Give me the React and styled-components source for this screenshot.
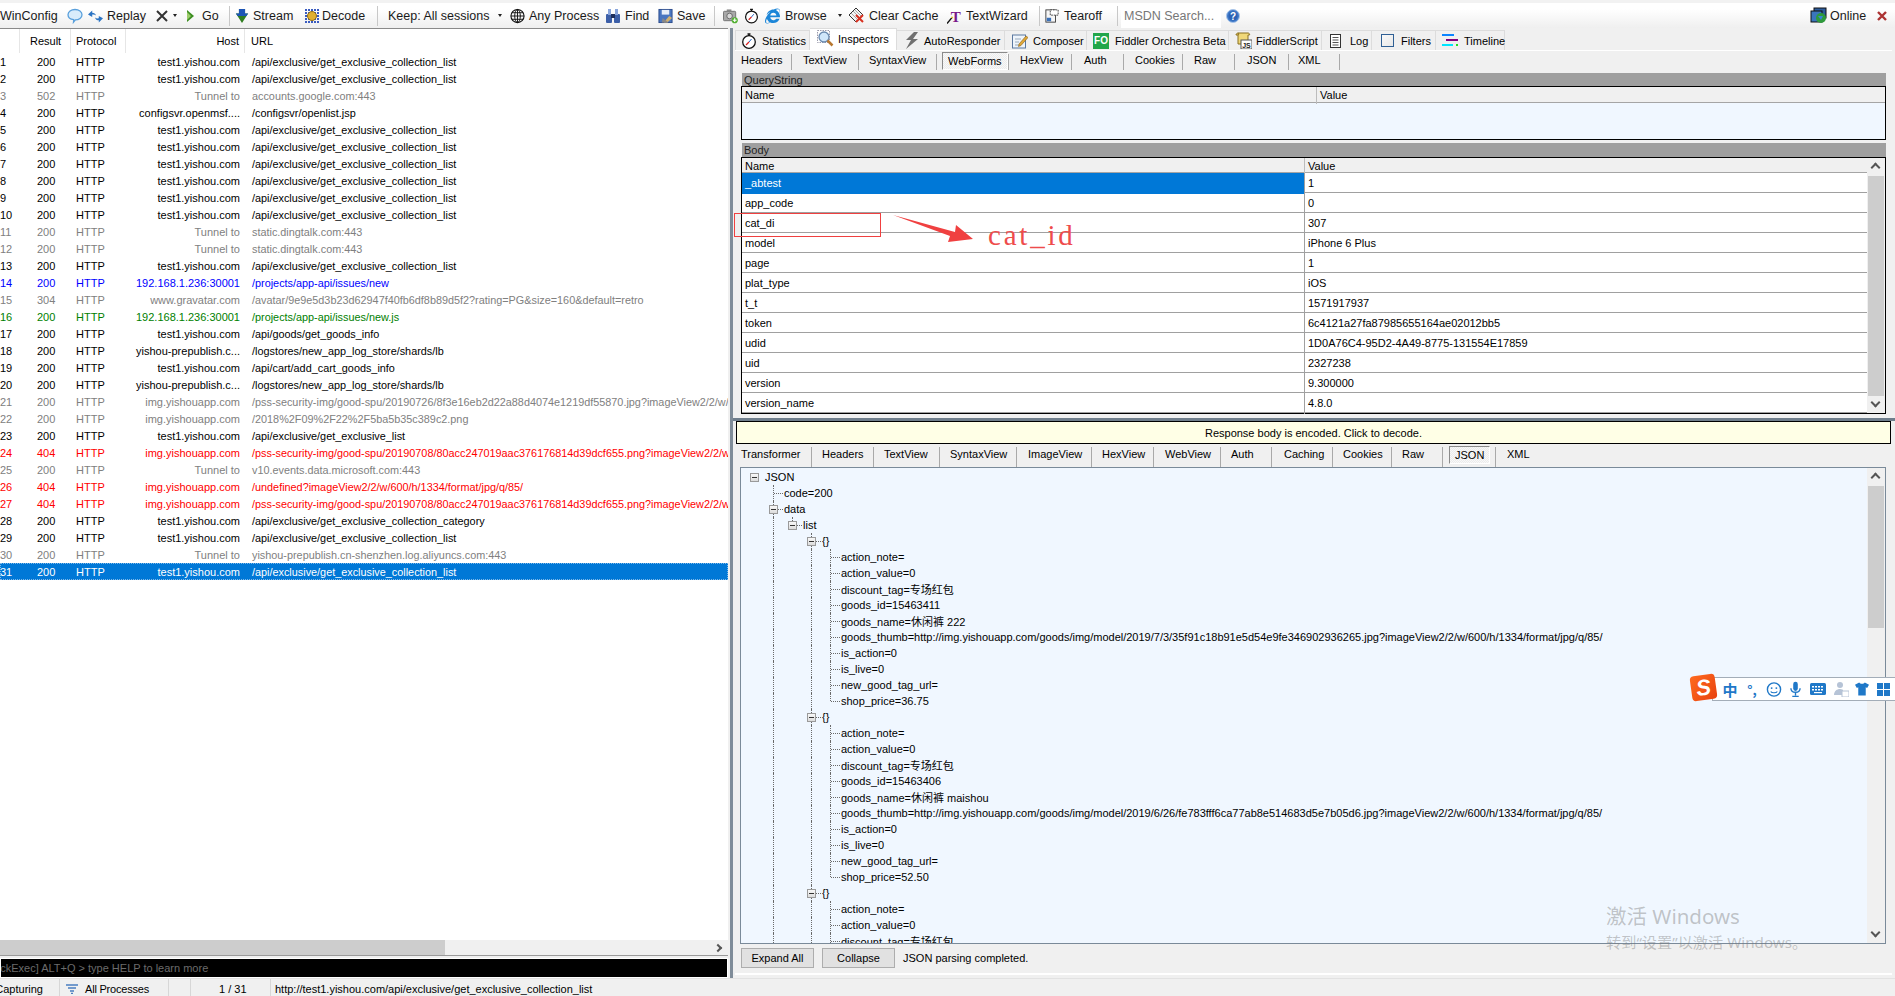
import React from "react";
import styled, { createGlobalStyle } from "styled-components";
import { FaInternetExplorer } from "react-icons/fa";

const Global = createGlobalStyle`
  html, body { margin: 0; padding: 0; background: #f0f0f0; }
  * { box-sizing: border-box; }
`;
const FONT = `"Liberation Sans", "Noto Sans CJK SC", sans-serif`;

const Root = styled.div`
  position: relative; width: 1895px; height: 996px; overflow: hidden;
  display: flex; flex-direction: column; background: #f0f0f0;
  font-family: ${FONT}; font-size: 11px; color: #000;
`;
const Toolbar = styled.div`
  height: 28px; flex: none; display: flex; align-items: center;
  background: linear-gradient(#ffffff 3px, #ffffff 6px, #efefef 100%);
  border-top: 3px solid #f2f2f2; font-size: 12.5px; color: #1a1a1a; white-space: nowrap;
`;
const Slot = styled.div`
  flex: none; width: ${p => p.$w}px; margin-left: ${p => p.$ml}px;
  display: flex; align-items: center; justify-content: center; height: 18px;
  svg { display: block; }
`;
const ToolLabel = styled.span`
  flex: none; width: ${p => p.$w}px; margin-left: ${p => p.$ml}px; letter-spacing: 0;
`;
const ToolSep = styled.span`
  flex: none; width: 1px; height: 20px; margin-left: ${p => p.$ml}px; background: #c8c8c8;
`;
const Caret = styled.span`
  flex: none; margin-left: ${p => p.$ml}px; width: 0; height: 0;
  border-left: 2.5px solid transparent; border-right: 2.5px solid transparent; border-top: 3px solid #222;
`;
const SearchBox = styled.div`
  flex: none; width: 100px; height: 24px; margin-left: ${p => p.$ml}px; padding: 1px 0 0 3px;
  background: #fff; color: #777; display: flex; align-items: center;
`;
const Online = styled.div`
  margin-left: auto; display: flex; align-items: center; padding-right: 8px;
  > svg:last-child { margin-left: 11px; }
`;

const Main = styled.div`flex: 1; min-height: 0; display: flex;`;
const LeftPane = styled.div`
  width: 728px; flex: none; display: flex; flex-direction: column;
  border-top: 1px solid #8a8a8a; background: #fff;
`;
const ListHeader = styled.div`
  height: 24px; flex: none; display: grid; grid-template-columns: 20px 51px 55px 119px 1fr;
  background: #fff;
`;
const HeadCell = styled.div`
  display: flex; align-items: center; border-right: ${p => p.$last ? 0 : 1}px solid #e6e6e6;
  padding-left: ${p => p.$pl || 0}px; padding-right: ${p => p.$pr || 0}px;
  justify-content: ${p => p.$right ? "flex-end" : "flex-start"}; height: 24px; padding-top: 0;
`;
const SessionList = styled.div`flex: 1; min-height: 0; overflow: hidden;`;
const COLORS = { n: "#000", g: "#808080", b: "#0000ff", v: "#008000", r: "#ff0000", s: "#fff" };
const SessionRow = styled.div`
  height: 17px; display: grid; grid-template-columns: 20px 51px 55px 119px 1fr; align-items: center;
  white-space: nowrap; color: ${p => COLORS[p.$tone]};
  background: ${p => p.$tone === "s" ? "#0078d7" : "transparent"};
  ${p => p.$tone === "s" ? "outline: 1px dotted #7fb8e8; outline-offset: -1px;" : ""}
`;
const IdCell = styled.div`text-align: left; overflow: hidden;`;
const ResultCell = styled.div`padding-left: 17px;`;
const ProtoCell = styled.div`padding-left: 5px;`;
const HostCell = styled.div`text-align: right; padding-right: 5px; overflow: hidden;`;
const UrlCell = styled.div`padding-left: 7px; overflow: hidden; font-size: 10.85px;`;
const HScroll = styled.div`
  height: 15px; flex: none; background: #f0f0f0; display: flex; position: relative;
  align-items: center; justify-content: flex-end; padding-right: 5px;
`;
const HThumb = styled.div`position: absolute; left: 0; top: 0; bottom: 0; width: 445px; background: #cdcdcd;`;
const ChevR = styled.span`
  width: 6px; height: 6px; border-right: 2px solid #555; border-top: 2px solid #555; transform: rotate(45deg);
  margin-right: 2px;
`;
const QuickGap = styled.div`height: 3px; flex: none; background: #f0f0f0; border-top: 1px solid #9a9a9a;`;
const QuickExec = styled.div`
  height: 20px; flex: none; background: #000; color: #6b6b6b; border: 1px solid #fff;
  display: flex; align-items: center; overflow: hidden; white-space: nowrap;
  span { margin-left: -21px; }
`;
const VSplit = styled.div`width: 5px; flex: none; background: linear-gradient(90deg, #f0f0f0 40%, #7f8c99 40%);`;

const RightPane = styled.div`flex: 1; min-width: 0; display: flex; flex-direction: column; padding-right: 3px;`;
const TabStrip = styled.div`height: 22px; flex: none; display: flex; align-items: flex-end; padding-left: 2px;`;
const MainTab = styled.div`
  flex: none; width: ${p => p.$w}px; padding-left: ${p => p.$pl}px; display: flex; align-items: center;
  gap: ${p => p.$gap}px; height: ${p => p.$active ? 22 : 20}px;
  background: ${p => p.$active ? "#fff" : "#f0f0f0"};
  border: 1px solid #dcdcdc; border-bottom: 0; border-left-width: ${p => p.$first ? 1 : 0}px;
  white-space: nowrap; padding-bottom: ${p => p.$active ? 2 : 0}px;
  svg { flex: none; display: block; }
`;
const Panel = styled.div`
  flex: 1; min-height: 0; display: flex; flex-direction: column; margin-left: 2px;
  border-top: 1px solid #fff;
`;
const SubTabs = styled.div`
  height: ${p => p.$h}px; flex: none; display: flex; align-items: stretch;
`;
const SubTab = styled.div`
  flex: none; width: ${p => p.$w}px; display: flex; align-items: center; padding: 0 0 ${p => p.$pb}px ${p => p.$pl}px;
  white-space: nowrap; position: relative;
  &::after { content: ${p => p.$nosep ? "none" : `""`}; position: absolute; right: 0; top: 3px; bottom: 0; width: 1px; background: #a9a9a9; }
`;
const ActiveTabBox = styled.span`
  padding: 2px 5px; border: 1px solid; border-color: #8a8a8a #fff #fff #8a8a8a; margin-top: 2px;
  background: repeating-conic-gradient(#f8f8f8 0 25%, #ececec 0 50%) 0 0 / 2px 2px;
`;
const Section = styled.div`margin: ${p => p.$mt}px 6px 0 5px; flex: none;`;
const SectionBar = styled.div`
  height: ${p => p.$h}px; background: #9f9f9f; padding-left: 2px; line-height: 14px; color: #222; margin-left: 2px;
`;
const GridBox = styled.div`
  height: ${p => p.$h}px; border: 1px solid #000; margin-left: 1px; position: relative;
  background: ${p => p.$tint ? "#f0f7ff" : "#fff"}; display: flex; flex-direction: column;
`;
const GridHead = styled.div`
  height: ${p => p.$h}px; flex: none; background: #f0f0f0; border-bottom: 1px solid #a5a5a5;
  display: grid; grid-template-columns: ${p => p.$cols}; align-items: center; margin-right: ${p => p.$mr || 0}px;
`;
const GridHeadCell = styled.div`
  padding-left: ${p => p.$pl}px; height: 100%; line-height: 17px; border-left: ${p => p.$sep ? "1px solid #bcbcbc" : 0};
`;
const GridRow = styled.div`
  height: 20px; flex: none; display: grid; grid-template-columns: 562px 1fr; margin-right: 18px;
  border-bottom: 1px solid #a0a0a0;
  &:last-child { border-bottom: 0; }
`;
const NameCell = styled.div`
  padding-left: 3px; line-height: 21px; background: ${p => p.$sel ? "#0078d7" : "transparent"};
  color: ${p => p.$sel ? "#fff" : "#000"};
`;
const ValueCell = styled.div`padding-left: 3px; line-height: 21px; border-left: 1px solid #a0a0a0;`;
const VScroll = styled.div`
  position: absolute; right: 0; top: ${p => p.$top || 0}px; bottom: 0; width: 18px; background: #f0f0f0;
`;
const VThumb = styled.div`
  position: absolute; left: 1px; right: 1px; top: ${p => p.$top}px; height: ${p => p.$h}px; background: #cdcdcd;
`;
const ArrowMark = styled.span`
  position: absolute; left: 5px; ${p => p.$up ? "top: 6px" : "bottom: 7px"}; width: 7px; height: 7px;
  border-right: 2px solid #555; border-bottom: 2px solid #555;
  transform: rotate(${p => p.$up ? 225 : 45}deg);
`;
const HSplit = styled.div`height: 3px; flex: none; margin-top: 4px; background: #6f7e8c; margin-left: -2px; margin-right: -3px;`;
const NoticeBar = styled.div`
  height: 23px; flex: none; background: #ffffe6; border: 1px solid #000; margin: 0 1px 0 1px;
  display: flex; align-items: center; justify-content: center;
`;
const TreeBox = styled.div`
  flex: 1; min-height: 0; margin: 0 6px 0 5px; border: 1px solid #7a8a99;
  background: #f0f7ff; position: relative; overflow: hidden; padding: 1px 0 0 4px;
`;
const TreeRow = styled.div`height: 16px; display: flex; align-items: center; white-space: nowrap;`;
const Cell = styled.div`
  flex: none; width: 19px; height: 16px; position: relative;
  &::before {
    content: ${p => p.$v ? `""` : "none"}; position: absolute; left: 9px; top: 0;
    bottom: ${p => p.$v === "end" ? 8 : 0}px; border-left: 1px dotted #6a6a6a;
  }
  &::after {
    content: ${p => p.$h ? `""` : "none"}; position: absolute; left: 10px; top: 8px; width: 9px;
    border-top: 1px dotted #6a6a6a;
  }
`;
const Toggle = styled.span`
  position: absolute; left: 5px; top: 4px; width: 9px; height: 9px; z-index: 1;
  border: 1px solid #9a9a9a; background: linear-gradient(#f8f8f8, #dcdcdc);
  &::after { content: ""; position: absolute; left: 1px; right: 1px; top: 3px; height: 1px; background: #333; }
`;
const TreeText = styled.span`margin-left: 1px;`;
const ButtonRow = styled.div`
  height: 29px; flex: none; display: flex; align-items: center; gap: 8px; padding: 0 0 2px 6px;
`;
const Btn = styled.div`
  width: 73px; height: 20px; background: #e1e1e1; border: 1px solid #adadad;
  display: flex; align-items: center; justify-content: center;
`;
const PanelFoot = styled.div`height: 5px; flex: none; border-top: 2px solid #fff;`;
const StatusBar = styled.div`
  height: 18px; flex: none; display: flex; align-items: center; background: #f0f0f0;
  border-top: 1px solid #e2e2e2; white-space: nowrap;
`;
const StatusCell = styled.div`
  flex: none; width: ${p => p.$w}px; height: 100%; display: flex; align-items: center; overflow: hidden;
  justify-content: ${p => p.$align || "flex-start"}; padding: 2px ${p => p.$pr || 0}px 0 ${p => p.$pl || 0}px; gap: 7px;
  border-right: ${p => p.$nosep ? 0 : "1px solid #d7d7d7"};
`;
const TightLabel = styled.span`letter-spacing: -0.2px;`;

/* overlays */
const MarkRect = styled.div`
  position: absolute; left: 734px; top: 213px; width: 147px; height: 24px; border: 1px solid #f04040;
`;
const MarkArrow = styled.svg`position: absolute; left: 890px; top: 212px;`;
const MarkText = styled.div`
  position: absolute; left: 988px; top: 218px; font-family: "Liberation Serif", serif; font-size: 29px;
  line-height: 34px; letter-spacing: 2.8px; color: #ee4c4c;
`;
const Watermark = styled.div`
  position: absolute; left: 1606px; top: ${p => p.$top}px; font-family: "Noto Sans", "Noto Sans CJK SC", sans-serif;
  font-size: ${p => p.$size}px; line-height: 1.2; color: rgba(120,120,120,.42); white-space: nowrap;
`;
const ImeBar = styled.div`
  position: absolute; left: 1712px; top: 677px; width: 183px; height: 24px; background: #fff;
  border: 1px solid #a3adb8; border-right: 0; display: flex; align-items: center; color: #1f78c8;
`;
const ImeLogo = styled.div`
  position: absolute; left: 1691px; top: 675px; width: 25px; height: 25px; border-radius: 4px; transform: rotate(-8deg);
  background: linear-gradient(135deg, #ff6a1f, #e8430f); color: #fff; font: italic bold 22px/25px "Liberation Sans", sans-serif;
  text-align: center;
`;
const ImeGlyph = styled.span`
  flex: none; width: ${p => p.$w}px; margin-left: ${p => p.$ml}px; font: bold ${p => p.$size || 14}px/1 "Noto Sans CJK SC", sans-serif;
  display: flex; justify-content: center; svg { display: block; }
`;

/* icons */
const Svg = ({ s = 16, children }) => <svg width={s} height={s} viewBox="0 0 16 16" fill="none">{children}</svg>;
const Bubble = () => <Svg><path d="M8 1.5c4 0 7 2.2 7 5.2s-3 5.2-6.6 5.2l-1.9 2.3.2-2.5C3.400 11.200 1 9.500 1 6.700 1 3.700 4 1.500 8 1.500z" fill="#d8ecfb" stroke="#5aa0dc" strokeWidth="1.3"/></Svg>;
const ReplayIc = () => <Svg><path d="M0 6.500L4.500 2v2.500c2 0 3.500.8 4 3-1-1-2.300-1.200-4-1V9z" fill="#2b74c4"/><path d="M16 10.500L11.500 15v-2.500c-2 0-3.500-.8-4-3 1 1 2.300 1.200 4 1V8z" fill="#2b74c4"/></Svg>;
const Cross = () => <svg width="12" height="12" viewBox="0 0 12 12"><path d="M1 1l10 10M11 1L1 11" stroke="#333" strokeWidth="2"/></svg>;
const GoIc = () => <svg width="7" height="12" viewBox="0 0 7 12"><path d="M0 0l7 6-7 6z" fill="#3d8f22"/><path d="M0 2l4 4-4 4z" fill="#9ccc6a"/></svg>;
const StreamIc = () => <Svg><path d="M4.500 0h7v5H15l-7 11-7-11h3.500z" fill="#2f7d20"/><path d="M4.500 0h7v5H15L13 8H3L1 5h3.500z" fill="#1d55b5"/></Svg>;
const DecodeIc = () => <Svg>{[1,4,7,10,13].map(x => [1,4,7,10,13].map(y => <rect key={x+"-"+y} x={x} y={y} width="2" height="2" fill="#3a5cc0"/>))}<circle cx="8" cy="8" r="4.500" fill="#e0b030" stroke="#8f6a10"/></Svg>;
const GlobeIc = () => <Svg><circle cx="8" cy="8" r="7" stroke="#111" strokeWidth="1.2"/><ellipse cx="8" cy="8" rx="3" ry="7" stroke="#111"/><path d="M1 8h14M2 4.500h12M2 11.500h12M8 1v14" stroke="#111"/></Svg>;
const BinocIc = () => <Svg><rect x="1" y="6" width="6" height="9" rx="1" fill="#3c5fa8"/><rect x="9" y="6" width="6" height="9" rx="1" fill="#3c5fa8"/><rect x="3" y="1" width="3" height="6" fill="#8aa6dc"/><rect x="10" y="1" width="3" height="6" fill="#8aa6dc"/><rect x="6" y="6" width="4" height="4" fill="#1e2f5c"/></Svg>;
const SaveIc = () => <Svg><rect x="1" y="1" width="14" height="14" fill="#4a76c0" stroke="#2a4a8c"/><rect x="4" y="1.500" width="8" height="5" fill="#e8eef8"/><path d="M6 15l6-7 3 2-5 5z" fill="#d0b070"/><path d="M5 10l6 5H4z" fill="#888"/></Svg>;
const SnapIc = () => <Svg><rect x="0.500" y="3" width="13" height="10" rx="1" fill="#a8a8a8" stroke="#707070"/><rect x="4" y="1" width="5" height="2" fill="#888"/><circle cx="7" cy="8" r="3" fill="#d8d8d8" stroke="#666"/><circle cx="12.500" cy="12.500" r="3.300" fill="#52b032"/><path d="M12.500 10.500v4M10.500 12.500h4" stroke="#fff" strokeWidth="1.200"/></Svg>;
const TimerIc = ({ s = 16 }) => <Svg s={s}><circle cx="8" cy="9" r="6.300" fill="#fff" stroke="#111" strokeWidth="1.300"/><path d="M6.500 1h3M8 1v2" stroke="#111" strokeWidth="1.300"/><path d="M8 9L5 12" stroke="#d82020" strokeWidth="1.300"/><path d="M8 9l2.500-3" stroke="#2060c0"/></Svg>;
const ClearIc = () => <svg width="17" height="17" viewBox="0 0 17 17" fill="none"><path d="M8 1l7 7-7 7-7-7z" fill="#f4f4f4" stroke="#333"/><path d="M3 6l6 6M5 4l6 6M7 3l6 6" stroke="#888" strokeWidth=".7"/><path d="M8 8l7 7M15 8l-7 7" stroke="#d83020" strokeWidth="2"/></svg>;
const SerifT = styled.text`font: bold 16px "Liberation Serif", serif; fill: #7a1a8a;`;
const WizardIc = () => <Svg><SerifT x="4" y="14">T</SerifT><path d="M0 16l5-6" stroke="#111" strokeWidth="1.500"/><path d="M5 10l1-1" stroke="#e0c020" strokeWidth="2"/></Svg>;
const TearIc = () => <Svg><rect x="1" y="1" width="11" height="14" fill="#f6f6f6" stroke="#333"/><rect x="6" y="1" width="9" height="6" fill="#fff" stroke="#333" strokeDasharray="2 1"/><rect x="2" y="10" width="5" height="4" fill="#3a70b8"/></Svg>;
const HelpIc = () => <svg width="14" height="14" viewBox="0 0 14 14"><circle cx="7" cy="7" r="6.500" fill="#3d78c8" stroke="#a8c4e8"/><circle cx="7" cy="7" r="4.500" fill="#2c62b4"/><text x="7" y="10.500" textAnchor="middle" fontFamily="Liberation Sans" fontWeight="bold" fontSize="10" fill="#fff">?</text></svg>;
const OnlineIc = () => <svg width="17" height="17" viewBox="0 0 17 17"><rect x="4" y="1" width="12" height="10" fill="#2c5c9c" stroke="#111"/><rect x="1" y="4" width="11" height="11" fill="#3a76bc" stroke="#111"/><circle cx="11" cy="11" r="5" fill="#2e9a3c"/><path d="M8 9h5l-2 4z" fill="#3a86d8"/></svg>;
const CloseIc = () => <svg width="10" height="10" viewBox="0 0 10 10"><path d="M1 1l8 8M9 1l-8 8" stroke="#ac3232" strokeWidth="2.400"/></svg>;
const MagnIc = () => <svg width="17" height="17" viewBox="0 0 17 17" fill="none"><rect x="0.500" y="0.500" width="12" height="12" stroke="#99a" strokeDasharray="1.500 1"/><circle cx="7" cy="7" r="5" fill="#cfe6fa" stroke="#6a8ab0" strokeWidth="1.300"/><path d="M10.500 10.500l5 5" stroke="#b87830" strokeWidth="2.500"/></svg>;
const BoltIc = () => <svg width="14" height="17" viewBox="0 0 14 17"><path d="M9 0L1 8h5l-5 9 12-10H8l5-7z" fill="#707070"/></svg>;
const ComposerIc = () => <Svg><rect x="0.500" y="2" width="13" height="13" fill="#eef4fb" stroke="#5a78a0"/><path d="M3 6h6M3 9h4M3 12h5" stroke="#9ab"/><path d="M7 11l7-8 2 1.500-7 8-2.500 1z" fill="#e0a838" stroke="#886018" strokeWidth=".6"/></Svg>;
const FoBadge = styled.span`
  width: 16px; height: 16px; background: #21a64a; color: #fff; font: bold 10px/16px "Liberation Sans", sans-serif;
  text-align: center; flex: none;
`;
const ScriptIc = () => <svg width="17" height="17" viewBox="0 0 17 17"><path d="M3 1h10c1 0 2 1 1.500 2H13v9H3z" fill="#f0d878" stroke="#8a7020"/><path d="M1 3c0-1 1-2 2-2s1 2 0 2z" fill="#e8c860" stroke="#8a7020"/><rect x="6" y="8" width="11" height="9" fill="#fff" stroke="#555"/><text x="11.500" y="15.500" textAnchor="middle" fontFamily="Liberation Sans" fontWeight="bold" fontSize="7" fill="#222">JS</text></svg>;
const LogIc = () => <svg width="11" height="14" viewBox="0 0 11 14" fill="none"><rect x=".5" y=".5" width="10" height="13" fill="#fff" stroke="#333"/><path d="M2.500 3.500h6M2.500 6h6M2.500 8.500h6M2.500 11h6" stroke="#555"/></svg>;
const FilterBox = styled.span`width: 13px; height: 13px; border: 1px solid #2f5f94; background: linear-gradient(135deg, #f8f8f8, #e8e8e8); flex: none;`;
const TimelineIc = () => <svg width="16" height="13" viewBox="0 0 16 13"><rect x="0" y="0" width="12" height="2" fill="#0a84ff"/><rect x="4" y="5" width="12" height="2" fill="#800080"/><rect x="0" y="10" width="11" height="2" fill="#00e5ff"/><rect x="14" y="10" width="2" height="2" fill="#22e022"/></svg>;
const FunnelIc = () => <svg width="12" height="10" viewBox="0 0 12 10"><path d="M0 1h12M2 4h8M4 7h4M5 9.500h2" stroke="#4a7ec0" strokeWidth="1.300"/></svg>;
const ArrowSvg = () => <MarkArrow width="90" height="34" viewBox="0 0 90 34"><path d="M3 3l62 17 1-7 17 14-25 3 2-6z" fill="#f04040"/></MarkArrow>;
const Smile = () => <svg width="17" height="17" viewBox="0 0 17 17" fill="none"><circle cx="8.500" cy="8.500" r="7" stroke="#1f78c8" strokeWidth="1.500"/><circle cx="6" cy="7" r="1" fill="#1f78c8"/><circle cx="11" cy="7" r="1" fill="#1f78c8"/><path d="M5 10.500c1 2 6 2 7 0" stroke="#1f78c8" strokeWidth="1.200"/></svg>;
const Mic = () => <svg width="12" height="17" viewBox="0 0 12 17" fill="none"><rect x="3.500" y="0" width="5" height="10" rx="2.500" fill="#1f78c8"/><path d="M1 7c0 6 10 6 10 0M6 12v3M2.500 16h7" stroke="#1f78c8" strokeWidth="1.500"/></svg>;
const Keys = () => <svg width="16" height="12" viewBox="0 0 16 12"><rect width="16" height="12" rx="1.500" fill="#1f78c8"/>{[2,5,8,11].map(x => <rect key={x} x={x} y="3" width="2" height="1.500" fill="#fff"/>)}{[2,5,8,11].map(x => <rect key={x} x={x} y="6" width="2" height="1.500" fill="#fff"/>)}<rect x="4" y="9" width="8" height="1.200" fill="#fff"/></svg>;
const Person = () => <svg width="16" height="16" viewBox="0 0 16 16"><circle cx="7" cy="4" r="3" fill="#b6c3d6"/><path d="M1 14c0-4 3-6 6-6 2 0 3 1 3 1v5z" fill="#b6c3d6"/><rect x="9" y="10" width="7" height="6" fill="#fff" stroke="#b6c3d6"/></svg>;
const Shirt = () => <svg width="15" height="14" viewBox="0 0 15 14"><path d="M4.500 0L0 2.500 2 6l1.500-.8V14h8V5.200L13 6l2-3.500L10.500 0c-1 2-5 2-6 0z" fill="#1f78c8"/></svg>;
const Tiles = () => <svg width="13" height="13" viewBox="0 0 13 13"><rect width="6" height="6" fill="#1f78c8"/><rect x="7" width="6" height="6" fill="#1f78c8"/><rect y="7" width="6" height="6" fill="#1f78c8"/><rect x="7" y="7" width="6" height="6" fill="#1f78c8"/></svg>;

/* data */
const API = "/api/exclusive/get_exclusive_collection_list";
const T1 = "test1.yishou.com";
const PSS = "/pss-security-img/good-spu/20190708/80acc247019aac376176814d39dcf655.png?imageView2/2/w/600/h/1334/format/jpg/q/85/";
const sessions = [
  ["1","200",T1,API,"n"],["2","200",T1,API,"n"],
  ["3","502","Tunnel to","accounts.google.com:443","g"],
  ["4","200","configsvr.openmsf....","/configsvr/openlist.jsp","n"],
  ["5","200",T1,API,"n"],["6","200",T1,API,"n"],["7","200",T1,API,"n"],["8","200",T1,API,"n"],["9","200",T1,API,"n"],["10","200",T1,API,"n"],
  ["11","200","Tunnel to","static.dingtalk.com:443","g"],["12","200","Tunnel to","static.dingtalk.com:443","g"],
  ["13","200",T1,API,"n"],
  ["14","200","192.168.1.236:30001","/projects/app-api/issues/new","b"],
  ["15","304","www.gravatar.com","/avatar/9e9e5d3b23d62947f40fb6df8b89d5f2?rating=PG&size=160&default=retro","g"],
  ["16","200","192.168.1.236:30001","/projects/app-api/issues/new.js","v"],
  ["17","200",T1,"/api/goods/get_goods_info","n"],
  ["18","200","yishou-prepublish.c...","/logstores/new_app_log_store/shards/lb","n"],
  ["19","200",T1,"/api/cart/add_cart_goods_info","n"],
  ["20","200","yishou-prepublish.c...","/logstores/new_app_log_store/shards/lb","n"],
  ["21","200","img.yishouapp.com","/pss-security-img/good-spu/20190726/8f3e16eb2d22a88d4074e1219df55870.jpg?imageView2/2/w/600/h/1334/format/jpg/q/85/","g"],
  ["22","200","img.yishouapp.com","/2018%2F09%2F22%2F5ba5b35c389c2.png","g"],
  ["23","200",T1,"/api/exclusive/get_exclusive_list","n"],
  ["24","404","img.yishouapp.com",PSS,"r"],
  ["25","200","Tunnel to","v10.events.data.microsoft.com:443","g"],
  ["26","404","img.yishouapp.com","/undefined?imageView2/2/w/600/h/1334/format/jpg/q/85/","r"],
  ["27","404","img.yishouapp.com",PSS,"r"],
  ["28","200",T1,"/api/exclusive/get_exclusive_collection_category","n"],
  ["29","200",T1,API,"n"],
  ["30","200","Tunnel to","yishou-prepublish.cn-shenzhen.log.aliyuncs.com:443","g"],
  ["31","200",T1,API,"s"],
];
const bodyRows = [
  ["_abtest","1"],["app_code","0"],["cat_di","307"],["model","iPhone 6 Plus"],["page","1"],["plat_type","iOS"],
  ["t_t","1571917937"],["token","6c4121a27fa87985655164ae02012bb5"],["udid","1D0A76C4-95D2-4A49-8775-131554E17859"],
  ["uid","2327238"],["version","9.300000"],["version_name","4.8.0"],
];
const reqTabs = [["Headers",57,6],["TextView",67,11],["SyntaxView",78,10],["WebForms",72,5,true],["HexView",63,11],["Auth",52,12],["Cookies",59,11],["Raw",52,11],["JSON",54,12],["XML",51,9]];
const resTabs = [["Transformer",77,6],["Headers",62,10],["TextView",66,10],["SyntaxView",77,10],["ImageView",75,11],["HexView",62,10],["WebView",67,11],["Auth",51,10],["Caching",61,12],["Cookies",59,10],["Raw",51,10],["JSON",53,6,true],["XML",50,11,false,true]];
const mainTabs = [
  ["Statistics",75,5,5,<TimerIc key="a"/>],["Inspectors",87,7,4,<MagnIc key="b"/>,true],["AutoResponder",108,8,5,<BoltIc key="c"/>],
  ["Composer",82,7,5,<ComposerIc key="d"/>],["Fiddler Orchestra Beta",142,6,6,<FoBadge key="e">FO</FoBadge>],
  ["FiddlerScript",93,6,4,<ScriptIc key="f"/>],["Log",50,8,9,<LogIc key="g"/>],["Filters",64,9,7,<FilterBox key="h"/>],["Timeline",69,6,6,<TimelineIc key="i"/>],
];
const item = (thumb, id, gname, price) => [
  "action_note=","action_value=0","discount_tag=专场红包",`goods_id=${id}`,`goods_name=${gname}`,`goods_thumb=${thumb}`,
  "is_action=0","is_live=0","new_good_tag_url=",`shop_price=${price}`,
];
const blocks = [
  item("http://img.yishouapp.com/goods/img/model/2019/7/3/35f91c18b91e5d54e9fe346902936265.jpg?imageView2/2/w/600/h/1334/format/jpg/q/85/","15463411","休闲裤 222","36.75"),
  item("http://img.yishouapp.com/goods/img/model/2019/6/26/fe783fff6ca77ab8e514683d5e7b05d6.jpg?imageView2/2/w/600/h/1334/format/jpg/q/85/","15463406","休闲裤 maishou","52.50"),
  ["action_note=","action_value=0","discount_tag=专场红包"],
];

const Branch = ({ guides, last, toggle, text }) => (
  <TreeRow>
    {guides.map((g, i) => <Cell key={i} $v={g} />)}
    <Cell $v={last ? "end" : true} $h>{toggle && <Toggle />}</Cell>
    <TreeText>{text}</TreeText>
  </TreeRow>
);

export default function App() {
  return (
    <Root>
      <Global />
      <Toolbar>
        <ToolLabel $ml={0} $w={55}>WinConfig</ToolLabel>
        <Slot $ml={12} $w={16}><Bubble /></Slot>
        <Slot $ml={5} $w={15}><ReplayIc /></Slot>
        <ToolLabel $ml={4} $w={39}>Replay</ToolLabel>
        <Slot $ml={10} $w={12}><Cross /></Slot>
        <Caret $ml={5} />
        <Slot $ml={10} $w={7}><GoIc /></Slot>
        <ToolLabel $ml={8} $w={17}>Go</ToolLabel>
        <ToolSep $ml={10} />
        <Slot $ml={5} $w={14}><StreamIc /></Slot>
        <ToolLabel $ml={4} $w={41}>Stream</ToolLabel>
        <Slot $ml={10} $w={16}><DecodeIc /></Slot>
        <ToolLabel $ml={2} $w={45}>Decode</ToolLabel>
        <ToolSep $ml={10} />
        <ToolLabel $ml={10} $w={103}>Keep: All sessions</ToolLabel>
        <Caret $ml={7} />
        <Slot $ml={8} $w={15}><GlobeIc /></Slot>
        <ToolLabel $ml={4} $w={69}>Any Process</ToolLabel>
        <Slot $ml={7} $w={16}><BinocIc /></Slot>
        <ToolLabel $ml={4} $w={23}>Find</ToolLabel>
        <Slot $ml={10} $w={15}><SaveIc /></Slot>
        <ToolLabel $ml={4} $w={27}>Save</ToolLabel>
        <ToolSep $ml={10} />
        <Slot $ml={8} $w={15}><SnapIc /></Slot>
        <Slot $ml={6} $w={15}><TimerIc /></Slot>
        <Slot $ml={6} $w={15}><FaInternetExplorer size={16} color="#1c86d8" /></Slot>
        <ToolLabel $ml={5} $w={42}>Browse</ToolLabel>
        <Caret $ml={11} />
        <Slot $ml={6} $w={17}><ClearIc /></Slot>
        <ToolLabel $ml={4} $w={68}>Clear Cache</ToolLabel>
        <Slot $ml={10} $w={15}><WizardIc /></Slot>
        <ToolLabel $ml={4} $w={64}>TextWizard</ToolLabel>
        <ToolSep $ml={9} />
        <Slot $ml={5} $w={14}><TearIc /></Slot>
        <ToolLabel $ml={5} $w={41}>Tearoff</ToolLabel>
        <ToolSep $ml={12} />
        <SearchBox $ml={3}>MSDN Search...</SearchBox>
        <Slot $ml={5} $w={14}><HelpIc /></Slot>
        <Online>
          <OnlineIc />
          <ToolLabel $ml={3} $w={36}>Online</ToolLabel>
          <CloseIc />
        </Online>
      </Toolbar>

      <Main>
        <LeftPane>
          <ListHeader>
            <HeadCell />
            <HeadCell $pl={10}>Result</HeadCell>
            <HeadCell $pl={5}>Protocol</HeadCell>
            <HeadCell $right $pr={5}>Host</HeadCell>
            <HeadCell $pl={6} $last>URL</HeadCell>
          </ListHeader>
          <SessionList>
            {sessions.map(([id, res, host, url, tone]) => (
              <SessionRow key={id} $tone={tone}>
                <IdCell>{id}</IdCell>
                <ResultCell>{res}</ResultCell>
                <ProtoCell>HTTP</ProtoCell>
                <HostCell>{host}</HostCell>
                <UrlCell>{url}</UrlCell>
              </SessionRow>
            ))}
          </SessionList>
          <HScroll><HThumb /><ChevR /></HScroll>
          <QuickGap />
          <QuickExec><span>[QuickExec] ALT+Q &gt; type HELP to learn more</span></QuickExec>
        </LeftPane>
        <VSplit />
        <RightPane>
          <TabStrip>
            {mainTabs.map(([label, w, pl, gap, icon, active], i) => (
              <MainTab key={label} $w={w} $pl={pl} $gap={gap} $active={active} $first={i === 0}>{icon}{label}</MainTab>
            ))}
          </TabStrip>
          <Panel>
            <SubTabs $h={19}>
              {reqTabs.map(([label, w, pl, active]) => (
                <SubTab key={label} $w={w} $pl={pl} $pb={2}>{active ? <ActiveTabBox>{label}</ActiveTabBox> : label}</SubTab>
              ))}
            </SubTabs>
            <Section $mt={3}>
              <SectionBar $h={13}>QueryString</SectionBar>
              <GridBox $h={54} $tint>
                <GridHead $h={16} $cols="574px 1fr"><GridHeadCell $pl={3}>Name</GridHeadCell><GridHeadCell $pl={3} $sep>Value</GridHeadCell></GridHead>
              </GridBox>
            </Section>
            <Section $mt={3}>
              <SectionBar $h={14}>Body</SectionBar>
              <GridBox $h={257}>
                <GridHead $h={15} $cols="562px 1fr" $mr={18}><GridHeadCell $pl={3}>Name</GridHeadCell><GridHeadCell $pl={3} $sep>Value</GridHeadCell></GridHead>
                {bodyRows.map(([n, v], i) => (
                  <GridRow key={n}><NameCell $sel={i === 0}>{n}</NameCell><ValueCell>{v}</ValueCell></GridRow>
                ))}
                <VScroll><ArrowMark $up /><VThumb $top={18} $h={220} /><ArrowMark /></VScroll>
              </GridBox>
            </Section>
            <HSplit />
            <NoticeBar>Response body is encoded. Click to decode.</NoticeBar>
            <SubTabs $h={23}>
              {resTabs.map(([label, w, pl, active, nosep]) => (
                <SubTab key={label} $w={w} $pl={pl} $pb={4} $nosep={nosep}>{active ? <ActiveTabBox>{label}</ActiveTabBox> : label}</SubTab>
              ))}
            </SubTabs>
            <TreeBox>
              <TreeRow><Cell><Toggle /></Cell><TreeText>JSON</TreeText></TreeRow>
              <Branch guides={[false]} text="code=200" />
              <Branch guides={[false]} toggle text="data" />
              <Branch guides={[false, true]} last toggle text="list" />
              {blocks.map((b, k) => (
                <React.Fragment key={k}>
                  <Branch guides={[false, true, false]} toggle text="{}" />
                  {b.map((t, i) => (
                    <Branch key={i} guides={[false, true, false, true]} last={i === 9} text={t} />
                  ))}
                </React.Fragment>
              ))}
              <VScroll><ArrowMark $up /><VThumb $top={18} $h={142} /><ArrowMark /></VScroll>
            </TreeBox>
            <ButtonRow>
              <Btn>Expand All</Btn>
              <Btn>Collapse</Btn>
              <span>JSON parsing completed.</span>
            </ButtonRow>
            <PanelFoot />
          </Panel>
        </RightPane>
      </Main>

      <StatusBar>
        <StatusCell $w={60} $align="flex-end" $pr={16}><span>Capturing</span></StatusCell>
        <StatusCell $w={109} $pl={6}><FunnelIc /><TightLabel>All Processes</TightLabel></StatusCell>
        <StatusCell $w={22} />
        <StatusCell $w={80} $pl={28}>1 / 31</StatusCell>
        <StatusCell $w={600} $pl={4} $nosep>http://test1.yishou.com/api/exclusive/get_exclusive_collection_list</StatusCell>
      </StatusBar>

      <MarkRect />
      <ArrowSvg />
      <MarkText>cat_id</MarkText>
      <ImeBar>
        <ImeGlyph $ml={10} $w={14} $size={15}>中</ImeGlyph>
        <ImeGlyph $ml={10} $w={10} $size={13}>°,</ImeGlyph>
        <ImeGlyph $ml={9} $w={16}><Smile /></ImeGlyph>
        <ImeGlyph $ml={8} $w={11}><Mic /></ImeGlyph>
        <ImeGlyph $ml={9} $w={16}><Keys /></ImeGlyph>
        <ImeGlyph $ml={7} $w={16}><Person /></ImeGlyph>
        <ImeGlyph $ml={6} $w={14}><Shirt /></ImeGlyph>
        <ImeGlyph $ml={8} $w={13}><Tiles /></ImeGlyph>
      </ImeBar>
      <ImeLogo>S</ImeLogo>
      <Watermark $top={904} $size={20.5}>激活 Windows</Watermark>
      <Watermark $top={933} $size={15.2}>转到“设置”以激活 Windows。</Watermark>
    </Root>
  );
}
